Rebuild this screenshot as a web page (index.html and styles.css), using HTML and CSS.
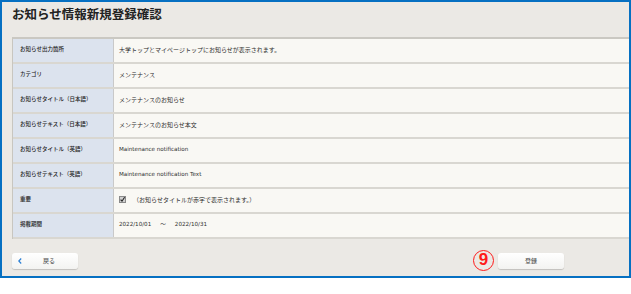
FILE: index.html
```html
<!DOCTYPE html>
<html lang="ja">
<head>
<meta charset="utf-8">
<link rel="stylesheet" href="styles.css">
</head>
<body>
<div class="frame">
  <h1 class="title">お知らせ情報新規登録確認</h1>
  <div class="table">
    <div class="row"><div class="label">お知らせ出力箇所</div><div class="value">大学トップとマイページトップにお知らせが表示されます。</div></div>
    <div class="row"><div class="label">カテゴリ</div><div class="value">メンテナンス</div></div>
    <div class="row"><div class="label">お知らせタイトル（日本語）</div><div class="value">メンテナンスのお知らせ</div></div>
    <div class="row"><div class="label">お知らせテキスト（日本語）</div><div class="value">メンテナンスのお知らせ本文</div></div>
    <div class="row"><div class="label">お知らせタイトル（英語）</div><div class="value latin">Maintenance notification</div></div>
    <div class="row"><div class="label">お知らせテキスト（英語）</div><div class="value latin">Maintenance notification Text</div></div>
    <div class="row"><div class="label">重要</div><div class="value"><svg class="check" width="7" height="7" viewBox="0 0 7 7"><rect x="0.5" y="0.5" width="6" height="6" fill="#d0d0d0" stroke="#8a8a8a"/><path d="M1.6 3.6 L3 5.2 L5.6 1.2" fill="none" stroke="#222" stroke-width="1.1"/></svg><span class="note">（お知らせタイトルが赤字で表示されます。）</span></div></div>
    <div class="row"><div class="label">掲載期間</div><div class="value latin">2022/10/01<span class="tilde">～</span>2022/10/31</div></div>
  </div>
  <div class="actions">
    <button class="btn back"><svg class="chev" width="4" height="6" viewBox="0 0 4 6"><path d="M3.2 0.5 L0.8 3 L3.2 5.5" fill="none" stroke="#2a7fd4" stroke-width="1.2"/></svg><span class="btn-text">戻る</span></button>
    <div class="right">
      <span class="badge">9</span>
      <button class="btn submit">登録</button>
    </div>
  </div>
</div>
</body>
</html>
```

FILE: styles.css
```css
html, body {
  margin: 0;
  padding: 0;
  background: #ffffff;
}
.frame {
  width: 631px;
  height: 278px;
  box-sizing: border-box;
  border: 2px solid #0670c2;
  background: #ebe9e5;
  font-family: "Noto Sans CJK JP", "Liberation Sans", sans-serif;
  color: #2e2e2e;
  display: flex;
  flex-direction: column;
}
.title {
  margin: 0;
  height: 35px;
  box-sizing: border-box;
  padding: 3px 0 0 10px;
  font-size: 12.5px;
  line-height: 18px;
  font-weight: bold;
  color: #222222;
}
.table {
  margin-left: 10px;
  border-top: 2px solid #cac8c2;
  border-left: 1px solid #c8c6c0;
}
.row {
  display: flex;
  height: 25px;
  box-sizing: border-box;
  border-bottom: 2px solid #d9d7d1;
}
.label {
  width: 101px;
  flex: none;
  box-sizing: border-box;
  background: #dce3ee;
  border-right: 1px solid #c9c9c9;
  padding: 0 0 3px 7px;
  font-size: 5.5px;
  font-weight: 500;
  color: #222222;
  display: flex;
  align-items: center;
  white-space: nowrap;
}
.value {
  flex: 1;
  background: #f9f8f4;
  padding: 0 0 3px 5px;
  font-size: 6px;
  display: flex;
  align-items: center;
  white-space: nowrap;
}
.latin {
  font-family: "DejaVu Sans", "Noto Sans CJK JP", sans-serif;
  font-size: 5.6px;
}
.tilde {
  margin: 0 9px;
  font-family: "Noto Sans CJK JP", sans-serif;
}
.check {
  margin-right: 7px;
}
.actions {
  display: flex;
  justify-content: space-between;
  align-items: center;
  padding: 11px 65px 0 10px;
}
.right {
  display: flex;
  align-items: center;
  gap: 4px;
}
.btn {
  width: 66px;
  height: 16px;
  border: none;
  border-radius: 3px;
  background: linear-gradient(#ffffff, #f3f3f1);
  box-shadow: 0 1px 1px rgba(0, 0, 0, 0.18);
  font-family: "Noto Sans CJK JP", sans-serif;
  font-size: 6px;
  color: #444444;
  padding: 0;
}
.back {
  display: flex;
  align-items: center;
  padding-left: 6px;
}
.back .btn-text {
  margin-left: 21px;
}
.badge {
  width: 21px;
  height: 21px;
  box-sizing: border-box;
  border: 1.5px solid #ff1a1a;
  border-radius: 50%;
  color: #ff1a1a;
  font-family: "Liberation Sans", sans-serif;
  font-weight: bold;
  font-size: 17px;
  line-height: 18px;
  text-align: center;
}
```
